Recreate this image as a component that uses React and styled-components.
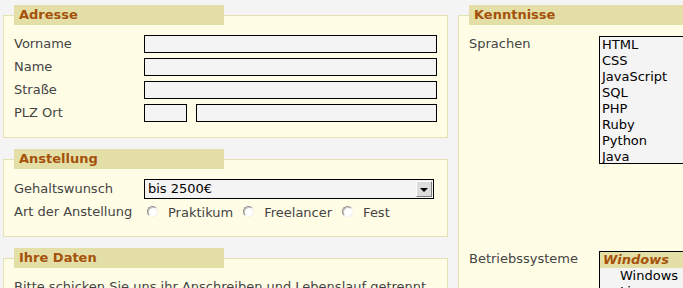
import styled, { createGlobalStyle } from 'styled-components';

const GlobalStyle = createGlobalStyle`
    html, body {
        margin : 0 ;
        padding : 0 ;
        overflow : hidden ;
        background : #f4f4f4 ;
    }
    body {
        font-family : "DejaVu Sans", Verdana, sans-serif ;
        font-size : 13px ;
        color : #444 ;
    }
`

const sprachen = ['HTML', 'CSS', 'JavaScript', 'SQL', 'PHP', 'Ruby', 'Python', 'Java'];

const App = () => {
    return (
    <>
    <GlobalStyle />
    <Page>
        <Column>
            <Fieldset>
                <Legend>Adresse</Legend>
                <Row>
                    <Label>Vorname</Label>
                    <TextInput $w={293} />
                </Row>
                <Row>
                    <Label>Name</Label>
                    <TextInput $w={293} />
                </Row>
                <Row>
                    <Label>Straße</Label>
                    <TextInput $w={293} />
                </Row>
                <Row>
                    <Label>PLZ Ort</Label>
                    <TextInput $w={43} $mr={9} />
                    <TextInput $w={241} />
                </Row>
            </Fieldset>

            <Fieldset>
                <Legend>Anstellung</Legend>
                <Row $h={20} $mb={4}>
                    <Label>Gehaltswunsch</Label>
                    <Select>
                        <SelectText>bis 2500€</SelectText>
                        <SelectButton><Arrow /></SelectButton>
                    </Select>
                </Row>
                <Row $h={17}>
                    <Label>Art der Anstellung</Label>
                    <Radio /><Choice>Praktikum</Choice>
                    <Radio /><Choice>Freelancer</Choice>
                    <Radio /><Choice>Fest</Choice>
                </Row>
            </Fieldset>

            <Fieldset $minHeight="120px">
                <Legend>Ihre Daten</Legend>
                <Text>Bitte schicken Sie uns ihr Anschreiben und Lebenslauf getrennt als PDF-Datei.</Text>
            </Fieldset>
        </Column>

        <Column>
            <Fieldset $minHeight="400px">
                <Legend $width="240px">Kenntnisse</Legend>
                <Row $align="flex-start" $mb={86}>
                    <Label>Sprachen</Label>
                    <ListBox $h={128}>
                        {sprachen.map(s => (
                            <Option key={s}>{s}</Option>
                        ))}
                    </ListBox>
                </Row>
                <Row $align="flex-start">
                    <Label>Betriebssysteme</Label>
                    <ListBox $h={80}>
                        <Group>Windows</Group>
                        <Option $indent>Windows</Option>
                        <Option $indent>Linux</Option>
                        <Option $indent>Mac OS</Option>
                    </ListBox>
                </Row>
            </Fieldset>
        </Column>
    </Page>
    </>
    )
}

export default App

const Page = styled.div`
    display : flex ;
    align-items : flex-start ;
    gap : 10px ;
    width : max-content ;
    padding : 5px 0 0 3px ;
`
const Column = styled.div`
    width : 445px ;
    flex-shrink : 0 ;
`
const Fieldset = styled.fieldset`
    margin : 0 0 11px ;
    padding : 10px ;
    min-width : 0 ;
    min-height : ${p => p.$minHeight || 'auto'} ;
    border : 1px solid #e6e1b4 ;
    background : #fffde5 ;
`
const Legend = styled.legend`
    box-sizing : border-box ;
    width : ${p => p.$width || '210px'} ;
    height : 20px ;
    margin : 0 ;
    padding : 0 5px ;
    line-height : 20px ;
    background : #e4dfa7 ;
    color : #a4520b ;
    font-weight : bold ;
    font-size : 13px ;
`
const Row = styled.div`
    display : flex ;
    align-items : ${p => p.$align || 'center'} ;
    min-height : ${p => p.$h || 18}px ;
    margin-bottom : ${p => p.$mb ?? 5}px ;
`
const Label = styled.label`
    width : 130px ;
    flex-shrink : 0 ;
    line-height : 18px ;
`
const TextInput = styled.input`
    box-sizing : border-box ;
    width : ${p => p.$w}px ;
    height : 18px ;
    margin : 0 ${p => p.$mr || 0}px 0 0 ;
    padding : 0 2px ;
    border : 1px solid #000 ;
    background : #f4f4f5 ;
    font : inherit ;
    outline : none ;
`
const Select = styled.div`
    box-sizing : border-box ;
    width : 290px ;
    height : 20px ;
    border : 1px solid #000 ;
    background : #f4f4f5 ;

    display : flex ;
    align-items : center ;
    justify-content : space-between ;
    padding : 0 1px 0 3px ;
`
const SelectText = styled.span`
    color : #000 ;
    line-height : 18px ;
`
const SelectButton = styled.span`
    box-sizing : border-box ;
    width : 16px ;
    height : 16px ;
    border : 1px solid ;
    border-color : #fff #808080 #808080 #fff ;
    background : #dcdcdc ;

    display : flex ;
    align-items : center ;
    justify-content : center ;
`
const Arrow = styled.span`
    width : 0 ;
    height : 0 ;
    margin-top : 1px ;
    border-left : 4px solid transparent ;
    border-right : 4px solid transparent ;
    border-top : 4px solid #000 ;
`
const Radio = styled.span`
    box-sizing : border-box ;
    width : 11px ;
    height : 11px ;
    flex-shrink : 0 ;
    align-self : flex-start ;
    margin : 3px 10px 0 3px ;
    border-radius : 50% ;
    border : 1px solid ;
    border-color : #8c8c8c #f2f2f2 #f2f2f2 #8c8c8c ;
    background : #fff ;
    box-shadow : inset 1px 1px 0 #c8c8c8 ;
`
const Choice = styled.span`
    margin-right : 7px ;
    line-height : 17px ;
`
const Text = styled.p`
    margin : 0 ;
    line-height : 18px ;
`
const ListBox = styled.div`
    box-sizing : border-box ;
    width : 160px ;
    height : ${p => p.$h}px ;
    margin-top : 1px ;
    overflow : hidden ;
    border : 1px solid #000 ;
    background : #f4f4f5 ;
`
const Option = styled.div`
    height : 16px ;
    line-height : 16px ;
    padding-left : ${p => p.$indent ? '20px' : '2px'} ;
    color : #000 ;
    white-space : nowrap ;
`
const Group = styled.div`
    height : 16px ;
    line-height : 16px ;
    padding-left : 3px ;
    background : #e4dfa7 ;
    color : #a4520b ;
    font-weight : bold ;
    font-style : italic ;
`
